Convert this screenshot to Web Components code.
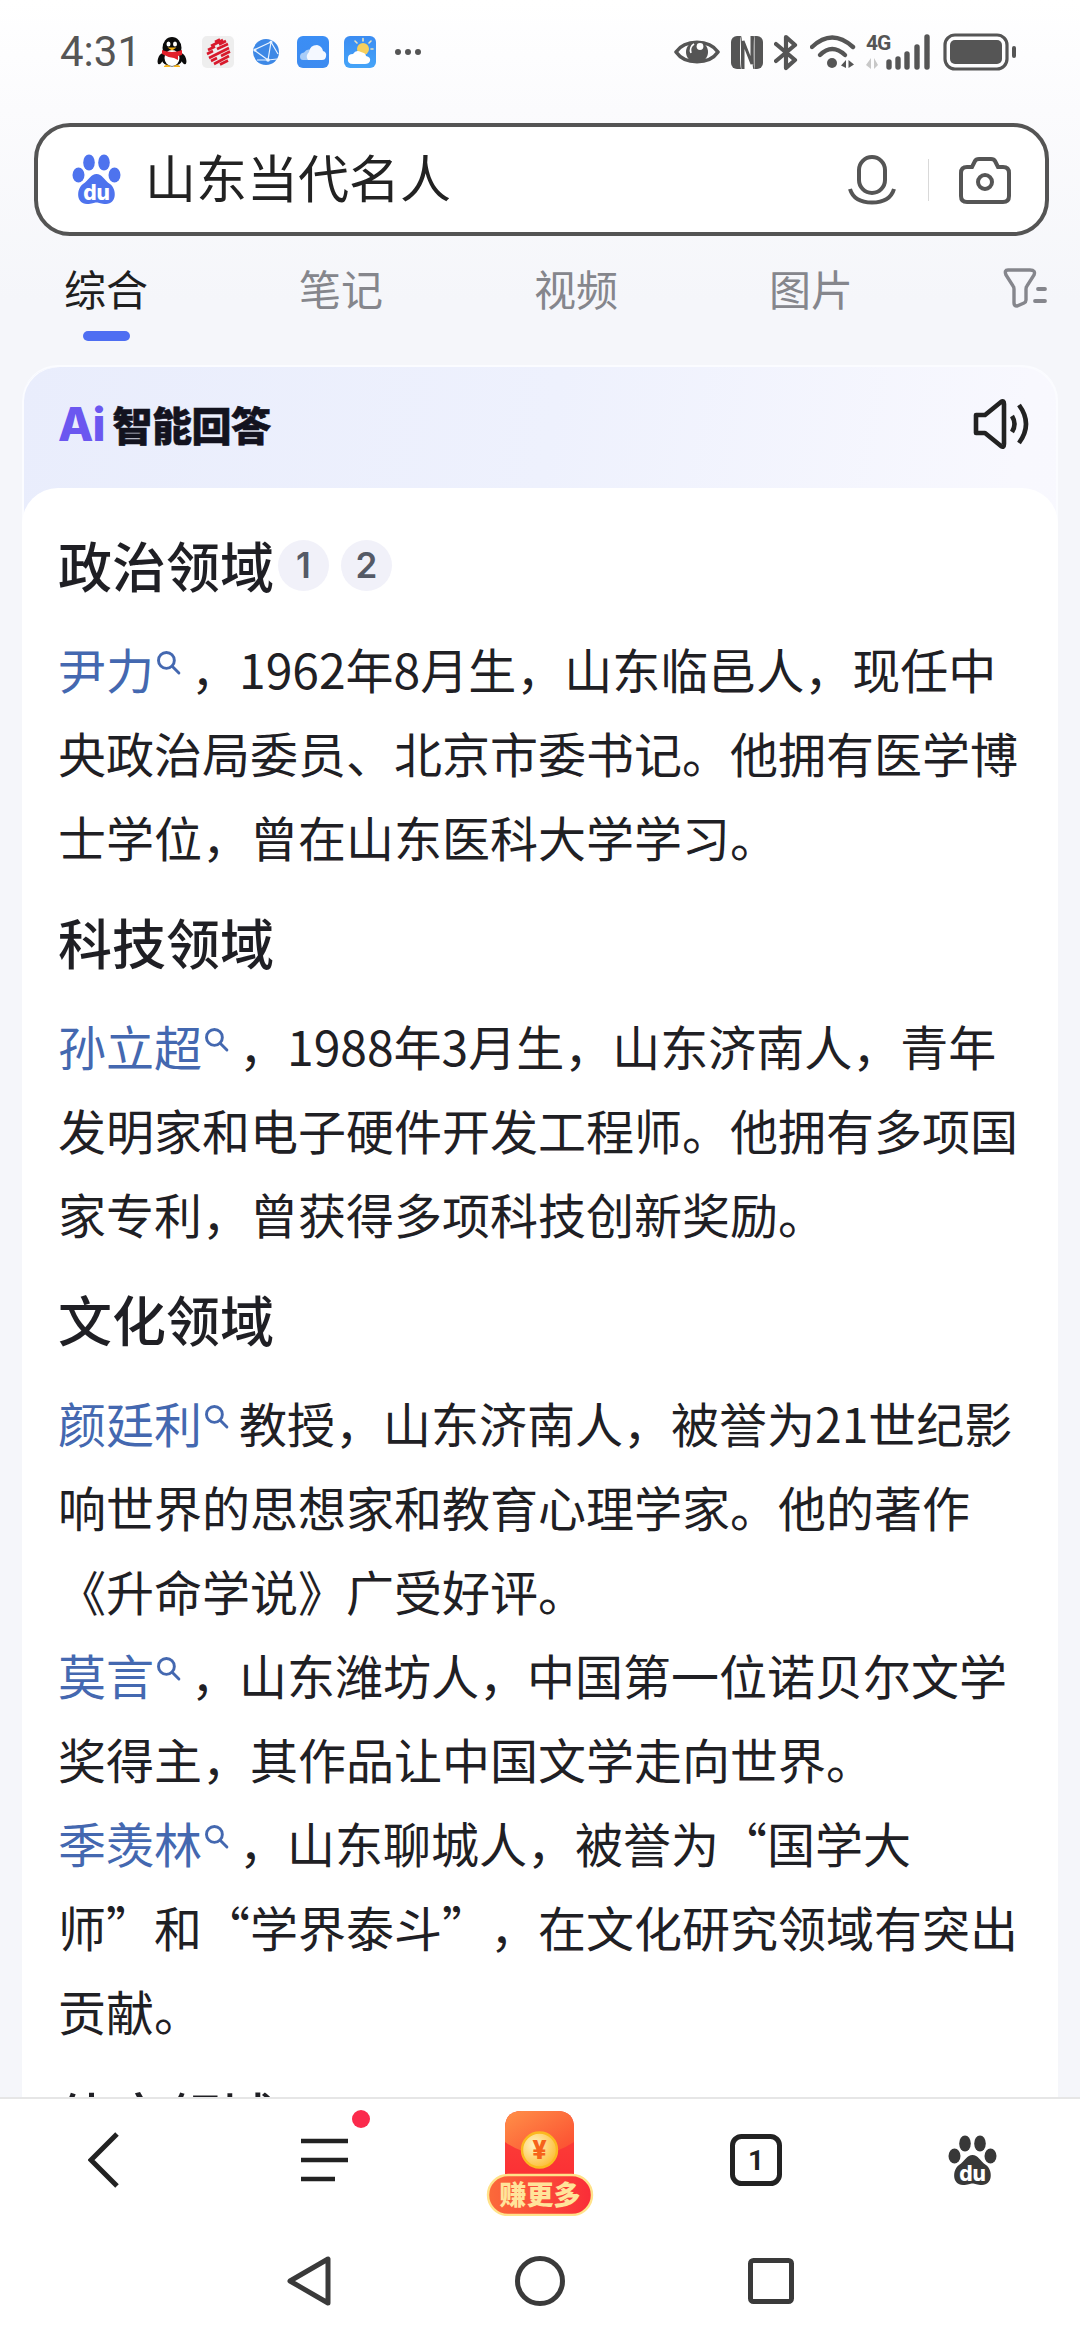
<!DOCTYPE html>
<html lang="zh-CN">
<head>
<meta charset="utf-8">
<title>山东当代名人</title>
<style>
  html, body { margin: 0; padding: 0; }
  body {
    width: 1080px;
    height: 2340px;
    overflow: hidden;
    font-family: "Noto Sans CJK SC", "Noto Sans", sans-serif;
    color: #1f2024;
    text-spacing-trim: space-all;
  }
</style>
</head>
<body>
<search-page>
  <ai-card>
    <ai-section>
      <span slot="title">政治领域</span>
      <cite-badge slot="cites">1</cite-badge>
      <cite-badge slot="cites">2</cite-badge>
      <search-term>尹力</search-term><span>，1962年8月生，山东临邑人，现任中</span><span>央政治局委员、北京市委书记。他拥有医学博士学位，曾在山东医科大学学习。</span>
    </ai-section>
    <ai-section>
      <span slot="title">科技领域</span>
      <search-term>孙立超</search-term><span>，1988年3月生，山东济南人，青年</span><span>发明家和电子硬件开发工程师。他拥有多项国家专利，曾获得多项科技创新奖励。</span>
    </ai-section>
    <ai-section>
      <span slot="title">文化领域</span>
      <search-term>颜廷利</search-term><span>教授，山东济南人，被誉为21世纪影</span><span>响世界的思想家和教育心理学家。他的著作《升命学说》广受好评。</span><br>
      <search-term>莫言</search-term><span>，山东潍坊人，中国第一位诺贝尔文学</span><span>奖得主，其作品让中国文学走向世界。</span><br>
      <search-term>季羡林</search-term><span>，山东聊城人，被誉为“国学大</span><br><span>师”和“学界泰斗”，在文化研究领域有突出贡献。</span>
    </ai-section>
    <ai-section style="margin-top:3px">
      <span slot="title">体育领域</span>
    </ai-section>
  </ai-card>
</search-page>

<script>
const PAW_TOES = `
  <ellipse cx="6.5" cy="21" rx="6" ry="7.5"/>
  <ellipse cx="17" cy="8.5" rx="5.8" ry="8"/>
  <ellipse cx="32" cy="8.5" rx="5.8" ry="8"/>
  <ellipse cx="42.5" cy="21" rx="6" ry="7.5"/>
  <path d="M24.5 20C30 20 32 26 38 30C45 35 45 50 34 50C29 50 27 48.5 24.5 48.5C22 48.5 20 50 15 50C4 50 4 35 11 30C17 26 19 20 24.5 20Z"/>`;

class StatusBar extends HTMLElement {
  constructor() {
    super();
    this.attachShadow({ mode: 'open' });
    this.shadowRoot.innerHTML = `
      <style>
        :host {
          display: flex;
          align-items: center;
          height: 104px;
          padding: 0 63px 0 60px;
          box-sizing: border-box;
          color: #555;
        }
        .time {
          font-family: Roboto, sans-serif;
          font-size: 42px;
          line-height: 50px;
          width: 97px;
        }
        .apps, .sys { display: flex; align-items: center; }
        .apps svg { margin-right: 15px; display: block; }
        .sys { margin-left: auto; }
        .sys svg { display: block; }
        .sig { position: relative; width: 65px; height: 36px; margin-left: 10px; }
        .sig b {
          position: absolute;
          left: 0;
          top: -2px;
          font: 700 21px/22px Roboto, sans-serif;
          letter-spacing: -1px;
        }
        .sig svg { position: absolute; left: 0; top: 0; }
      </style>
      <span class="time">4:31</span>
      <div class="apps">
        <svg width="30" height="32" viewBox="0 0 30 32">
          <ellipse cx="15" cy="12" rx="9.5" ry="11" fill="#0b0b0b"/>
          <ellipse cx="15" cy="21" rx="11" ry="9.5" fill="#0b0b0b"/>
          <ellipse cx="15" cy="22" rx="7.5" ry="8" fill="#fff"/>
          <ellipse cx="3.5" cy="23" rx="2.5" ry="5.5" fill="#0b0b0b" transform="rotate(18 3.5 23)"/>
          <ellipse cx="26.5" cy="23" rx="2.5" ry="5.5" fill="#0b0b0b" transform="rotate(-18 26.5 23)"/>
          <path d="M5 14Q15 18 25 14L25 19L21 20L21 24L17 22Q10 21 5 18Z" fill="#e3202a"/>
          <ellipse cx="11.5" cy="8" rx="2" ry="2.6" fill="#fff"/>
          <ellipse cx="18" cy="8" rx="2" ry="2.6" fill="#fff"/>
          <path d="M10.5 11.5H19.5L15 14.5Z" fill="#f6b319"/>
          <path d="M7 30.5H13L10 29ZM17 30.5H23L20 29Z" fill="#f6b319" stroke="#f6b319"/>
        </svg>
        <svg width="32" height="32" viewBox="0 0 32 32">
          <rect width="32" height="32" rx="5" fill="#eeeeee"/>
          <g stroke="#d8192c" stroke-width="2.6" fill="none">
            <path d="M13 6L18 3.5M9 10L21 4M6 14L13 10.5M17 8.5L24 5M5 18L11 15M15 13L26 8"/>
            <path d="M7 22L27 12M9 25L15 22M19 20L28 15.5M12 28L27 20M18 28.5L26 24.5"/>
          </g>
        </svg>
        <svg width="32" height="32" viewBox="0 0 32 32" style="margin-left:1px">
          <circle cx="16" cy="16" r="13" fill="#3d88e6"/>
          <g stroke="#e9f3ff" stroke-width="1.2" fill="none">
            <path d="M4 14L21 6L18 24L7 24M4 14L18 24M21 6L28 18M18 24L27 23"/>
          </g>
          <circle cx="18" cy="24" r="1.8" fill="#e9f3ff"/>
          <circle cx="21" cy="6" r="1.5" fill="#e9f3ff"/>
          <circle cx="5" cy="14" r="1.5" fill="#e9f3ff"/>
        </svg>
        <svg width="32" height="32" viewBox="0 0 32 32">
          <defs><linearGradient id="sky" x1="0" y1="0" x2="0" y2="1"><stop offset="0" stop-color="#3b8ef5"/><stop offset="1" stop-color="#3d8bf0"/></linearGradient></defs>
          <rect width="32" height="32" rx="6" fill="url(#sky)"/>
          <path d="M6 24Q3 24 3 20.5Q3 17 7 16.5Q10 12 14 14L20 24Z" fill="#a9cdf8"/>
          <path d="M11 24Q8 20 12 16Q13 9 20 9Q25 10 26 15Q30 16 29 20.5Q28.5 24 25 24Z" fill="#f4f8ff"/>
        </svg>
        <svg width="32" height="32" viewBox="0 0 32 32">
          <defs><linearGradient id="day" x1="0" y1="0" x2="0" y2="1"><stop offset="0" stop-color="#3b8cf2"/><stop offset="1" stop-color="#45a4f8"/></linearGradient></defs>
          <rect width="32" height="32" rx="6" fill="url(#day)"/>
          <circle cx="19" cy="13" r="6" fill="#f7cf5d"/>
          <path d="M19 2.5V5M11 5L13 7M27 5L25 7M29 13H27" stroke="#e8e2c0" stroke-width="1.6" stroke-linecap="round"/>
          <path d="M9 28Q3 28 4 22Q4 18 9 18Q12 13 17 16Q22 17 22 20Q27 21 26 25Q25 28 21 28Z" fill="#fff"/>
        </svg>
        <svg width="30" height="8" viewBox="0 0 30 8" style="margin-left:3px">
          <circle cx="4" cy="4" r="3" fill="#555"/><circle cx="14" cy="4" r="3" fill="#555"/><circle cx="24" cy="4" r="3" fill="#555"/>
        </svg>
      </div>
      <div class="sys">
        <svg width="46" height="32" viewBox="0 0 46 32">
          <path d="M2 16C11 3 35 3 44 16C35 29 11 29 2 16Z" fill="none" stroke="#555" stroke-width="3.6" stroke-linejoin="round"/>
          <circle cx="23" cy="16" r="11" fill="#555"/>
          <path d="M20 8A7 7 0 0 0 17 17A8 8 0 0 1 20 8Z" fill="#fff" stroke="#fff" stroke-width="1.5"/>
          <circle cx="26" cy="10.5" r="3.4" fill="#fff"/>
        </svg>
        <svg width="32" height="33" viewBox="0 0 32 33" style="margin-left:11px">
          <rect width="32" height="33" rx="6" fill="#555"/>
          <rect x="9" y="0" width="14.5" height="33" fill="#fff"/>
          <path d="M12 33V5L21 28V0" fill="none" stroke="#555" stroke-width="3"/>
          <path d="M9.5 0C11 3 11 30 9.5 33M23 0C21.5 3 21.5 30 23 33" fill="none" stroke="#555" stroke-width="1.2"/>
        </svg>
        <svg width="24" height="37" viewBox="0 0 24 37" style="margin-left:11px">
          <path d="M2 10L21 26L12 34V3L21 11L2 27" fill="none" stroke="#555" stroke-width="4.2" stroke-linejoin="round" stroke-linecap="round"/>
        </svg>
        <svg width="46" height="36" viewBox="0 0 46 36" style="margin-left:12px">
          <path d="M2 13Q22 -6 43 13" fill="none" stroke="#555" stroke-width="4.4" stroke-linecap="round"/>
          <path d="M10 21Q22 9 35 21" fill="none" stroke="#555" stroke-width="4.4" stroke-linecap="round"/>
          <circle cx="22" cy="29" r="5" fill="#555"/>
          <path d="M36 26V34L31 31.5ZM38.5 26V34L44 30.5Z" fill="#555"/>
        </svg>
        <div class="sig">
          <b>4G</b>
          <svg width="65" height="36" viewBox="0 0 65 36">
            <path d="M5 24V35L0 31ZM8 24V35L12 31Z" fill="#c8c8c8"/>
            <g fill="none" stroke="#555" stroke-width="5.4" stroke-linecap="round">
              <path d="M23 28V33M32 25V33M41 20V33M51 13V33M61 3V33"/>
            </g>
          </svg>
        </div>
        <svg width="74" height="38" viewBox="0 0 74 38" style="margin-left:12px">
          <rect x="2" y="2" width="62" height="34" rx="10" fill="none" stroke="#555" stroke-width="3.2"/>
          <rect x="7" y="7" width="52" height="24" rx="5" fill="#555"/>
          <rect x="69" y="13" width="4" height="12" rx="2" fill="#555"/>
        </svg>
      </div>
    `;
  }
}

class SearchBox extends HTMLElement {
  constructor() {
    super();
    this.attachShadow({ mode: 'open' });
    this.shadowRoot.innerHTML = `
      <style>
        :host {
          display: flex;
          align-items: center;
          box-sizing: border-box;
          height: 113px;
          margin: 19px 31px 0 34px;
          padding: 0 34px 0 34px;
          background: #fff;
          border: 4px solid #545454;
          border-radius: 36px;
        }
        svg { display: block; flex: none; }
        .q { font-size: 51px; line-height: 60px; color: #222; margin: 0 0 8px 24px; flex: 1; }
        .sep { width: 1px; height: 42px; background: #d9d9d9; margin: 0 30px 0 32px; }
        text { font-family: Inter, Roboto, sans-serif; font-weight: 800; }
      </style>
      <svg width="49" height="51" viewBox="0 0 49 51" fill="#4e73ee">
        ${PAW_TOES}
        <text x="24.5" y="45.5" font-size="21" text-anchor="middle" fill="#fff">du</text>
      </svg>
      <span class="q">山东当代名人</span>
      <svg width="48" height="50" viewBox="0 0 48 50" fill="none" stroke="#555" stroke-width="4">
        <rect x="11" y="2" width="26" height="36" rx="13"/>
        <path d="M2 34Q6 47.5 24 47.5Q42 47.5 46 34"/>
      </svg>
      <span class="sep"></span>
      <svg width="52" height="48" viewBox="0 0 52 48" fill="none" stroke="#555" stroke-width="4">
        <path d="M8 11H13L16 5Q17 3 20 3H32Q35 3 36 5L39 11H44Q50 11 50 17V40Q50 46 44 46H8Q2 46 2 40V17Q2 11 8 11Z"/>
        <circle cx="26" cy="26" r="7"/>
      </svg>
    `;
  }
}

class ResultTabs extends HTMLElement {
  constructor() {
    super();
    this.attachShadow({ mode: 'open' });
    this.shadowRoot.innerHTML = `
      <style>
        :host {
          display: flex;
          align-items: flex-start;
          box-sizing: border-box;
          height: 129px;
          padding: 22px 33px 0 64px;
        }
        .list { display: flex; column-gap: 151px; }
        .tab {
          display: flex;
          flex-direction: column;
          align-items: center;
          flex: none;
          width: 84px;
          font-size: 42px;
          line-height: 60px;
          white-space: nowrap;
          color: #85868c;
        }
        .tab.on { color: #1f1f1f; }
        .bar { width: 47px; height: 10px; margin-top: 13px; border-radius: 5px; background: #4e6ef2; }
        svg { display: block; margin: 10px 0 0 auto; flex: none; }
      </style>
      <div class="list">
        <div class="tab on">综合<span class="bar"></span></div>
        <div class="tab">笔记</div>
        <div class="tab">视频</div>
        <div class="tab">图片</div>
      </div>
      <svg width="44" height="40" viewBox="0 0 44 40" fill="none" stroke="#85868c" stroke-width="3.4" stroke-linecap="round">
        <path d="M5 2H27Q33 2 31 7L24 18Q23 19 23 21V32Q23 34 21 35L14 38Q11 38 11 35V21Q11 19 10 18L3 7Q1 2 5 2Z"/>
        <path d="M35 21H42M32 33H42" stroke-width="3.8"/>
      </svg>
    `;
  }
}

class AiCard extends HTMLElement {
  constructor() {
    super();
    this.attachShadow({ mode: 'open' });
    this.shadowRoot.innerHTML = `
      <style>
        :host {
          display: block;
          margin: 0 22px;
          box-sizing: border-box;
          border: solid #fbfcff;
          border-width: 2px 0 0;
          border-radius: 36px 36px 0 0;
          background: linear-gradient(100deg, #e9edfc 0%, #eef1fd 40%, #f8f8fe 75%, #f9f9fe 100%);
          box-shadow: inset 2px 0 0 #fbfcff, inset -2px 0 0 #fbfcff;
        }
        header {
          display: flex;
          align-items: center;
          height: 121px;
          padding: 0 27px 8px 36px;
          box-sizing: border-box;
        }
        .ai {
          font: 800 46px/56px Inter, Roboto, sans-serif;
          letter-spacing: -1px;
          color: #6b57f0;
          margin-right: 8px;
        }
        .title {
          font-size: 40px;
          line-height: 56px;
          font-weight: 900;
          letter-spacing: -0.5px;
          color: #13131f;
          -webkit-text-stroke: 0.6px #13131f;
        }
        svg { margin-left: auto; display: block; }
        .body {
          background: #fff;
          border-radius: 36px 36px 0 0;
          padding: 13px 36px 0;
        }
      </style>
      <header>
        <span class="ai">Ai</span>
        <span class="title">智能回答</span>
        <svg width="58" height="52" viewBox="0 0 58 52" fill="none" stroke="#222" stroke-width="4.6" stroke-linecap="round" stroke-linejoin="round">
          <path d="M3 17H12L28 4Q31 2 31 6V46Q31 50 28 48L12 35H3Z"/>
          <path d="M39 18Q44 26 39 34M46 7Q60 26 46 45" stroke-linecap="butt"/>
        </svg>
      </header>
      <div class="body"><slot></slot></div>
    `;
  }
}

class AiSection extends HTMLElement {
  constructor() {
    super();
    this.attachShadow({ mode: 'open' });
    this.shadowRoot.innerHTML = `
      <style>
        :host {
          display: block;
          font-size: 48px;
          line-height: 84px;
          color: #1f2024;
        }
        h2 {
          display: flex;
          align-items: center;
          margin: 32px 0 29px;
          font-size: 54px;
          line-height: 64px;
          font-weight: 500;
          color: #1f1f24;
        }
        .cites { display: flex; column-gap: 12px; margin-left: 4px; }
      </style>
      <h2><slot name="title"></slot><span class="cites"><slot name="cites"></slot></span></h2>
      <slot></slot>
    `;
  }
}

class CiteBadge extends HTMLElement {
  constructor() {
    super();
    this.attachShadow({ mode: 'open' });
    this.shadowRoot.innerHTML = `
      <style>
        :host {
          display: flex;
          align-items: center;
          justify-content: center;
          width: 51px;
          height: 51px;
          border-radius: 50%;
          background: #f1f1f9;
          font: 600 35px/51px Inter, Roboto, sans-serif;
          color: #555a66;
        }
      </style>
      <slot></slot>
    `;
  }
}

class SearchTerm extends HTMLElement {
  constructor() {
    super();
    this.attachShadow({ mode: 'open' });
    this.shadowRoot.innerHTML = `
      <style>
        :host { display: inline; color: #4468b0; }
        svg { display: inline-block; vertical-align: 14px; margin: 0 10px 0 2px; }
      </style>
      <slot></slot><svg width="25" height="25" viewBox="0 0 24 24" fill="none" stroke="#4468b0" stroke-width="2.8" stroke-linecap="round"><circle cx="10" cy="10" r="7.6"/><path d="M16 16L22 22"/></svg>`;
  }
}

class BottomToolbar extends HTMLElement {
  constructor() {
    super();
    this.attachShadow({ mode: 'open' });
    this.shadowRoot.innerHTML = `
      <style>
        :host {
          display: grid;
          grid-template-columns: repeat(5, 216px);
          align-items: center;
          justify-items: center;
          height: 124px;
          box-sizing: border-box;
          background: #fff;
          border-top: 2px solid #e6e6e6;
        }
        svg { display: block; }
        .menu { position: relative; }
        .dot {
          position: absolute;
          top: -28px;
          right: -22px;
          width: 18px;
          height: 18px;
          border-radius: 50%;
          background: #fb2a4c;
        }
        .gift { margin-top: 6px; }
        .count { font: 700 28px Roboto, sans-serif; fill: #222; }
        .gift text { font-weight: 900; }
      </style>
      <svg style="margin-right:8px" width="32" height="56" viewBox="0 0 32 56" fill="none" stroke="#222" stroke-width="5">
        <path d="M29 2L3 28L29 54"/>
      </svg>
      <div class="menu">
        <svg width="47" height="44" viewBox="0 0 47 44" fill="none" stroke="#222" stroke-width="4.6">
          <path d="M0 3H47M0 22H47M0 41H34"/>
        </svg>
        <span class="dot"></span>
      </div>
      <svg class="gift" width="108" height="106" viewBox="0 0 108 106">
        <defs>
          <linearGradient id="flap" x1="0" y1="0" x2="1" y2="1"><stop offset="0" stop-color="#ff9048"/><stop offset="1" stop-color="#fb4a30"/></linearGradient>
          <linearGradient id="env" x1="0" y1="0" x2="0" y2="1"><stop offset="0" stop-color="#fb4437"/><stop offset="1" stop-color="#fb2f35"/></linearGradient>
          <linearGradient id="pill" x1="0" y1="0" x2="1" y2="0"><stop offset="0" stop-color="#fb6a3a"/><stop offset="1" stop-color="#fa2c38"/></linearGradient>
          <radialGradient id="coin" cx=".35" cy=".35" r=".8"><stop offset="0" stop-color="#fff3c4"/><stop offset="1" stop-color="#fdb622"/></radialGradient>
        </defs>
        <path d="M19 70V18Q19 1 36 1H71Q88 1 88 18V70Z" fill="url(#env)"/>
        <path d="M19 32V18Q19 1 36 1H71Q88 1 88 18V32Q70 44 53.5 44Q36 44 19 32Z" fill="url(#flap)"/>
        <circle cx="53.5" cy="40" r="17.5" fill="url(#coin)" stroke="#fbb91f" stroke-width="2.4"/>
        <text x="53.5" y="49" font-size="26" text-anchor="middle" fill="#f6631a" font-family="Roboto, sans-serif">¥</text>
        <rect x="2" y="65" width="104" height="40" rx="20" fill="url(#pill)" stroke="#ffe28a" stroke-width="2.4"/>
        <text x="54" y="95" font-size="27" text-anchor="middle" fill="#ffe49a" font-family="Noto Sans CJK SC, sans-serif">赚更多</text>
      </svg>
      <svg width="52" height="52" viewBox="0 0 52 52">
        <rect x="2.5" y="2.5" width="47" height="47" rx="9" fill="none" stroke="#222" stroke-width="5"/>
        <text class="count" x="26" y="36" text-anchor="middle">1</text>
      </svg>
      <svg width="49" height="51" viewBox="0 0 49 51" fill="#383838">
        ${PAW_TOES}
        <text x="24.5" y="45.5" font-size="21" text-anchor="middle" fill="#fff" font-family="Inter, Roboto, sans-serif" font-weight="800">du</text>
      </svg>
    `;
  }
}

class NavBar extends HTMLElement {
  constructor() {
    super();
    this.attachShadow({ mode: 'open' });
    this.shadowRoot.innerHTML = `
      <style>
        :host {
          display: grid;
          grid-template-columns: repeat(3, 231px);
          justify-content: center;
          justify-items: center;
          align-items: center;
          height: 119px;
          background: #fff;
        }
        svg { display: block; }
      </style>
      <svg width="44" height="50" viewBox="0 0 44 50" fill="none" stroke="#3a3a3a" stroke-width="5" stroke-linejoin="round">
        <path d="M3 25L41 3V47Z"/>
      </svg>
      <svg width="50" height="50" viewBox="0 0 50 50" fill="none" stroke="#3a3a3a" stroke-width="5">
        <circle cx="25" cy="25" r="22.5"/>
      </svg>
      <svg width="46" height="46" viewBox="0 0 46 46" fill="none" stroke="#3a3a3a" stroke-width="5">
        <rect x="2.5" y="2.5" width="41" height="41" rx="3"/>
      </svg>
    `;
  }
}

class SearchPage extends HTMLElement {
  constructor() {
    super();
    this.attachShadow({ mode: 'open' });
    this.shadowRoot.innerHTML = `
      <style>
        :host {
          display: flex;
          flex-direction: column;
          width: 1080px;
          height: 2340px;
          background: linear-gradient(#ffffff 0, #fbfbfd 110px, #f5f6fa 300px);
        }
        main { flex: 1; min-height: 0; overflow: hidden; }
      </style>
      <status-bar></status-bar>
      <search-box></search-box>
      <result-tabs></result-tabs>
      <main><slot></slot></main>
      <bottom-toolbar></bottom-toolbar>
      <nav-bar></nav-bar>
    `;
  }
}

customElements.define('status-bar', StatusBar);
customElements.define('search-box', SearchBox);
customElements.define('result-tabs', ResultTabs);
customElements.define('ai-card', AiCard);
customElements.define('ai-section', AiSection);
customElements.define('cite-badge', CiteBadge);
customElements.define('search-term', SearchTerm);
customElements.define('bottom-toolbar', BottomToolbar);
customElements.define('nav-bar', NavBar);
customElements.define('search-page', SearchPage);
</script>
</body>
</html>
